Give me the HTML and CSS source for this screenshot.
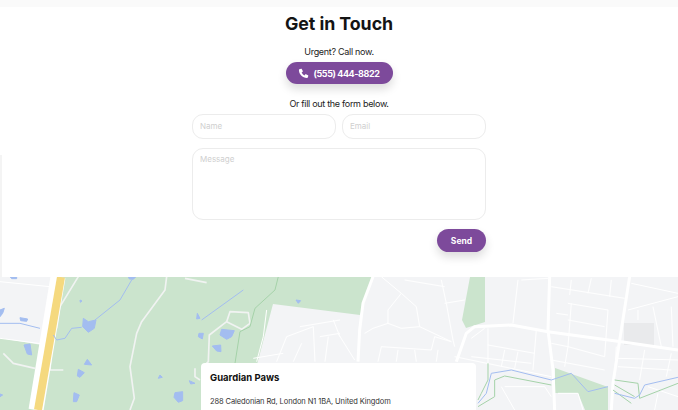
FILE: index.html
```html
<!DOCTYPE html>
<html lang="en">
  <head>
    <meta charset="UTF-8" />
    <meta name="viewport" content="width=device-width, initial-scale=1.0" />
    <title>Get in Touch</title>
    <link rel="stylesheet" href="styles.css">
  </head>

  <body>
    <div class="top__strip"></div>
    <span class="edge__shadow"></span>

    <section class="contact">
      <h1>Get in Touch</h1>
      <p class="urgent">Urgent? Call now.</p>
      <a class="btn btn-call" href="#">
        <svg class="phone" viewBox="0 0 24 24" aria-hidden="true">
          <path d="M6.6 1.6c.6-.2 1.300 0 1.600.6l2.200 4.400c.3.5.2 1.100-.2 1.500L7.900 10c1.300 2.800 3.300 4.800 6.100 6.100l1.900-2.300c.4-.4 1-.5 1.500-.2l4.400 2.200c.6.3.8 1 .6 1.600l-1.100 3.500c-.2.6-.7 1-1.300 1C10.300 22.200 1.800 13.700 2 3.900c0-.6.4-1.100 1-1.300z" />
        </svg>
        (555) 444-8822
      </a>
      <p class="below">Or fill out the form below.</p>

      <form class="contact__form">
        <div class="form__row">
          <input type="text" placeholder="Name" />
          <input type="email" placeholder="Email" />
        </div>
        <textarea placeholder="Message"></textarea>
        <div class="form__actions">
          <button class="btn btn-send" type="button">Send</button>
        </div>
      </form>
    </section>

    <section class="map">
      <svg class="map__art" viewBox="0 0 678 133" aria-hidden="true">
        <rect width="678" height="133" fill="#cbe4cd" />

        <!-- built up areas -->
        <path class="urban" d="M0 0H56L42 68L0 61Z" />
        <path class="urban" d="M273 27L360 38L373 0H470L462 43L466 51L485 45V0H678V133H608V110L555 91V116H578L585 133H245Z" />
        <rect class="block" x="624" y="46" width="30" height="22" />

        <!-- left half, traced at 3x -->
        <g transform="scale(0.3333) translate(0 -21)">
          <g class="street">
            <path d="M0 35L150 50M0 205L130 222" />
            <path d="M900 170L1020 150M830 275L860 200L940 170L945 275M880 275L905 220M1000 150L1020 200M760 265L850 250M800 120L790 200L770 275M960 200L1020 190M975 275L985 200" />
          </g>
          <g class="track">
            <path d="M235 20L180 110L170 175M155 230L150 300H190" />
            <path d="M500 20L495 60L425 155L410 190L390 290L403 385L390 420" />
            <path d="M555 25L620 38" />
            <path d="M690 125L745 128L750 160L725 178L680 155ZM680 155L628 195L625 275L610 290M585 295L585 320L600 330" />
            <path d="M10 250L40 280L105 295" />
          </g>
          <path class="stream" d="M835 20L825 60L765 115L750 170L720 185L705 280" />
        </g>

        <!-- highway -->
        <path d="M58 0L36 133" fill="none" stroke="#fff" stroke-width="15" />
        <path d="M61 0L38 133" fill="none" stroke="#f5d97f" stroke-width="8" />

        <g transform="scale(0.3333) translate(0 -21)">
          <g class="water__line">
            <path d="M0 160L60 160L120 175" />
            <path d="M395 30L360 90L285 150M245 172L215 175L195 205L170 210L160 195" />
            <path d="M605 150L730 60" />
          </g>
          <g class="water">
            <path d="M250 145L265 155L288 150L283 175L265 187L248 170Z" />
            <path d="M30 20H50V26H35Z M0 120L13 115L8 130L0 140Z M60 143L83 147L80 154L62 152Z" />
            <path d="M72 225L90 222L95 255L82 252Z M0 372L8 375L0 380Z M240 90L246 93L241 97Z" />
            <path d="M262 268L275 285L253 283Z M235 298L253 308L240 322L232 318Z M222 368L238 375L230 395L220 395Z" />
            <path d="M525 368L548 365L548 392L535 397L522 382Z M480 315L487 322L475 325Z M568 332L585 340L572 342Z" />
            <path d="M592 130L600 145L590 147Z M597 190L610 190L607 207L595 200Z M665 178L703 182L695 200L680 208L660 195Z M637 228L662 225L663 245L650 243Z M888 90L902 92L895 100Z" />
            <path d="M385 20H408L400 28L388 27Z" />
          </g>
        </g>

        <!-- right half, traced at 3x -->
        <g transform="translate(338 -7) scale(0.3333)">
          <g class="street">
            <path d="M190 70L150 120L150 160L105 175L80 190M190 70L235 110L245 170L190 175L150 160M245 170L340 215" />
            <path d="M310 30L325 100L345 210L350 230M320 100L380 90M200 30L320 50M130 20L190 70" />
            <path d="M130 230L280 240L290 200L340 215M130 230L120 275M180 240L175 275M0 190L50 270M230 240L235 275M300 240L295 275" />
            <path d="M400 205L440 175M450 175L450 280M450 225L590 250M595 180L585 300M540 30L525 160M550 30L630 25M400 260L580 280M500 240L490 290M540 245L530 295" />
            <path d="M640 50L860 85M700 100L690 230M690 100L810 120L800 260M690 230L800 260M690 150L800 170M655 130L690 135M640 220L690 230" />
            <path d="M880 40L1020 70M870 120L1020 80M945 110L970 230M900 120L900 150M1000 110L1005 230M700 30L695 75M760 25L750 70M820 30L815 80" />
            <path d="M835 230L830 320M920 240L905 330M1000 250L985 320M840 265L1020 270M640 270L800 300M690 230L680 290" />
            <path d="M350 260L640 320M500 350L620 350L640 380M490 350L530 420M660 370L720 370L735 420M840 290L1000 300M930 350L1020 380M960 370L950 420" />
          </g>
          <g class="road">
            <path d="M105 20L75 100L65 180L60 275" />
            <path d="M355 275L385 190L410 170L520 165L630 185L850 215L1020 240" />
            <path d="M635 20L630 180L645 300L650 420" />
            <path d="M875 20L850 180L825 340L820 420" />
          </g>
          <g class="stream">
            <path d="M450 280L450 330L430 370L420 390M420 410L470 380L470 330L500 318L640 345" />
            <path d="M830 330L900 340L905 385M830 345L890 380M825 360L880 400M905 385L1020 340" />
          </g>
          <g class="water__line">
            <path d="M420 400L445 370L460 310L520 300L640 330L700 310L750 365L810 350" />
            <path d="M830 370L890 385L905 375L920 345L1020 322" />
          </g>
        </g>
      </svg>

      <div class="map__card">
        <h2>Guardian Paws</h2>
        <p>288 Caledonian Rd, London N1 1BA, United Kingdom</p>
      </div>
    </section>
  </body>
</html>
```

FILE: styles.css
```css
/* CSS Reset */
html {
  box-sizing: border-box;
  font-size: 16px;
}

*,
*:before,
*:after {
  box-sizing: inherit;
}

body,
h1,
h2,
p {
  margin: 0;
  padding: 0;
  font-weight: normal;
}

body {
  position: relative;
  height: 410px;
  overflow: hidden;
  background: #fff;
  color: #1a1a1a;
  font-family: "Inter", "Liberation Sans", sans-serif;
}

.top__strip {
  height: 7px;
  background: #fafafa;
}

.edge__shadow {
  position: absolute;
  left: 0;
  top: 155px;
  width: 2px;
  height: 122px;
  background: #f4f4f4;
}

.contact {
  display: flex;
  flex-direction: column;
  align-items: center;
  height: 270px;
}

.contact h1 {
  margin-top: 6px;
  font-size: 17.8px;
  line-height: 22px;
  font-weight: 700;
  letter-spacing: -0.05px;
  color: #141414;
}

.urgent,
.below {
  font-size: 9px;
  line-height: 14px;
  letter-spacing: -0.3px;
  color: #222;
}

.urgent {
  margin-top: 10px;
}

.below {
  margin-top: 13px;
}

.btn {
  display: flex;
  align-items: center;
  justify-content: center;
  border: 0;
  color: #fff;
  background: #7d4a9b;
  font-family: inherit;
  font-size: 9px;
  font-weight: 700;
  text-decoration: none;
  box-shadow: 0 5px 10px rgba(0, 0, 0, 0.14);
}

.btn-call {
  gap: 4px;
  width: 107px;
  height: 22px;
  margin-top: 3px;
  border-radius: 11px;
  letter-spacing: -0.4px;
}

.phone {
  width: 11px;
  height: 11px;
  fill: #fff;
}

.btn-send {
  width: 49px;
  height: 23px;
  border-radius: 12px;
  font-size: 8.5px;
}

.contact__form {
  display: flex;
  flex-direction: column;
  width: 294px;
  margin-top: 3px;
}

.form__row {
  display: flex;
  gap: 6px;
}

.contact__form input,
.contact__form textarea {
  display: block;
  width: 100%;
  min-width: 0;
  padding: 0 7px;
  border: 1px solid #ececec;
  border-radius: 11px;
  outline: 0;
  resize: none;
  background: #fff;
  font-family: inherit;
  font-size: 8px;
}

.contact__form input {
  height: 25px;
  padding-bottom: 2px;
}

.contact__form textarea {
  height: 72px;
  margin-top: 9px;
  padding-top: 5px;
}

.contact__form ::placeholder {
  color: #cfcfcf;
}

.form__actions {
  display: flex;
  justify-content: flex-end;
  margin-top: 9px;
}

.map {
  position: relative;
  height: 133px;
  overflow: hidden;
}

.map__art {
  display: block;
  width: 678px;
  height: 133px;
}

.urban {
  fill: #f3f4f6;
}

.block {
  fill: #e9eaec;
}

.street,
.road,
.track,
.stream,
.water__line {
  fill: none;
  stroke-linejoin: round;
}

.street {
  stroke: #fff;
  stroke-width: 3;
}

.road {
  stroke: #fff;
  stroke-width: 9;
}

.track {
  stroke: #f1f3f2;
  stroke-width: 5;
}

.stream {
  stroke: #a5d2a9;
  stroke-width: 3;
}

.water__line {
  stroke: #a3bdf0;
  stroke-width: 3;
}

.water {
  fill: #a3bdf0;
  stroke: #a3bdf0;
  stroke-width: 3;
  stroke-linejoin: round;
}

.map__card {
  position: absolute;
  left: 201px;
  top: 86px;
  width: 275px;
  height: 60px;
  padding: 8px 9px;
  border-radius: 4px;
  background: #fff;
}

.map__card h2 {
  font-size: 9.5px;
  line-height: 14px;
  font-weight: 700;
  color: #111;
}

.map__card p {
  margin-top: 11px;
  font-size: 7.5px;
  line-height: 12px;
  letter-spacing: -0.1px;
  color: #333;
  white-space: nowrap;
}
```
